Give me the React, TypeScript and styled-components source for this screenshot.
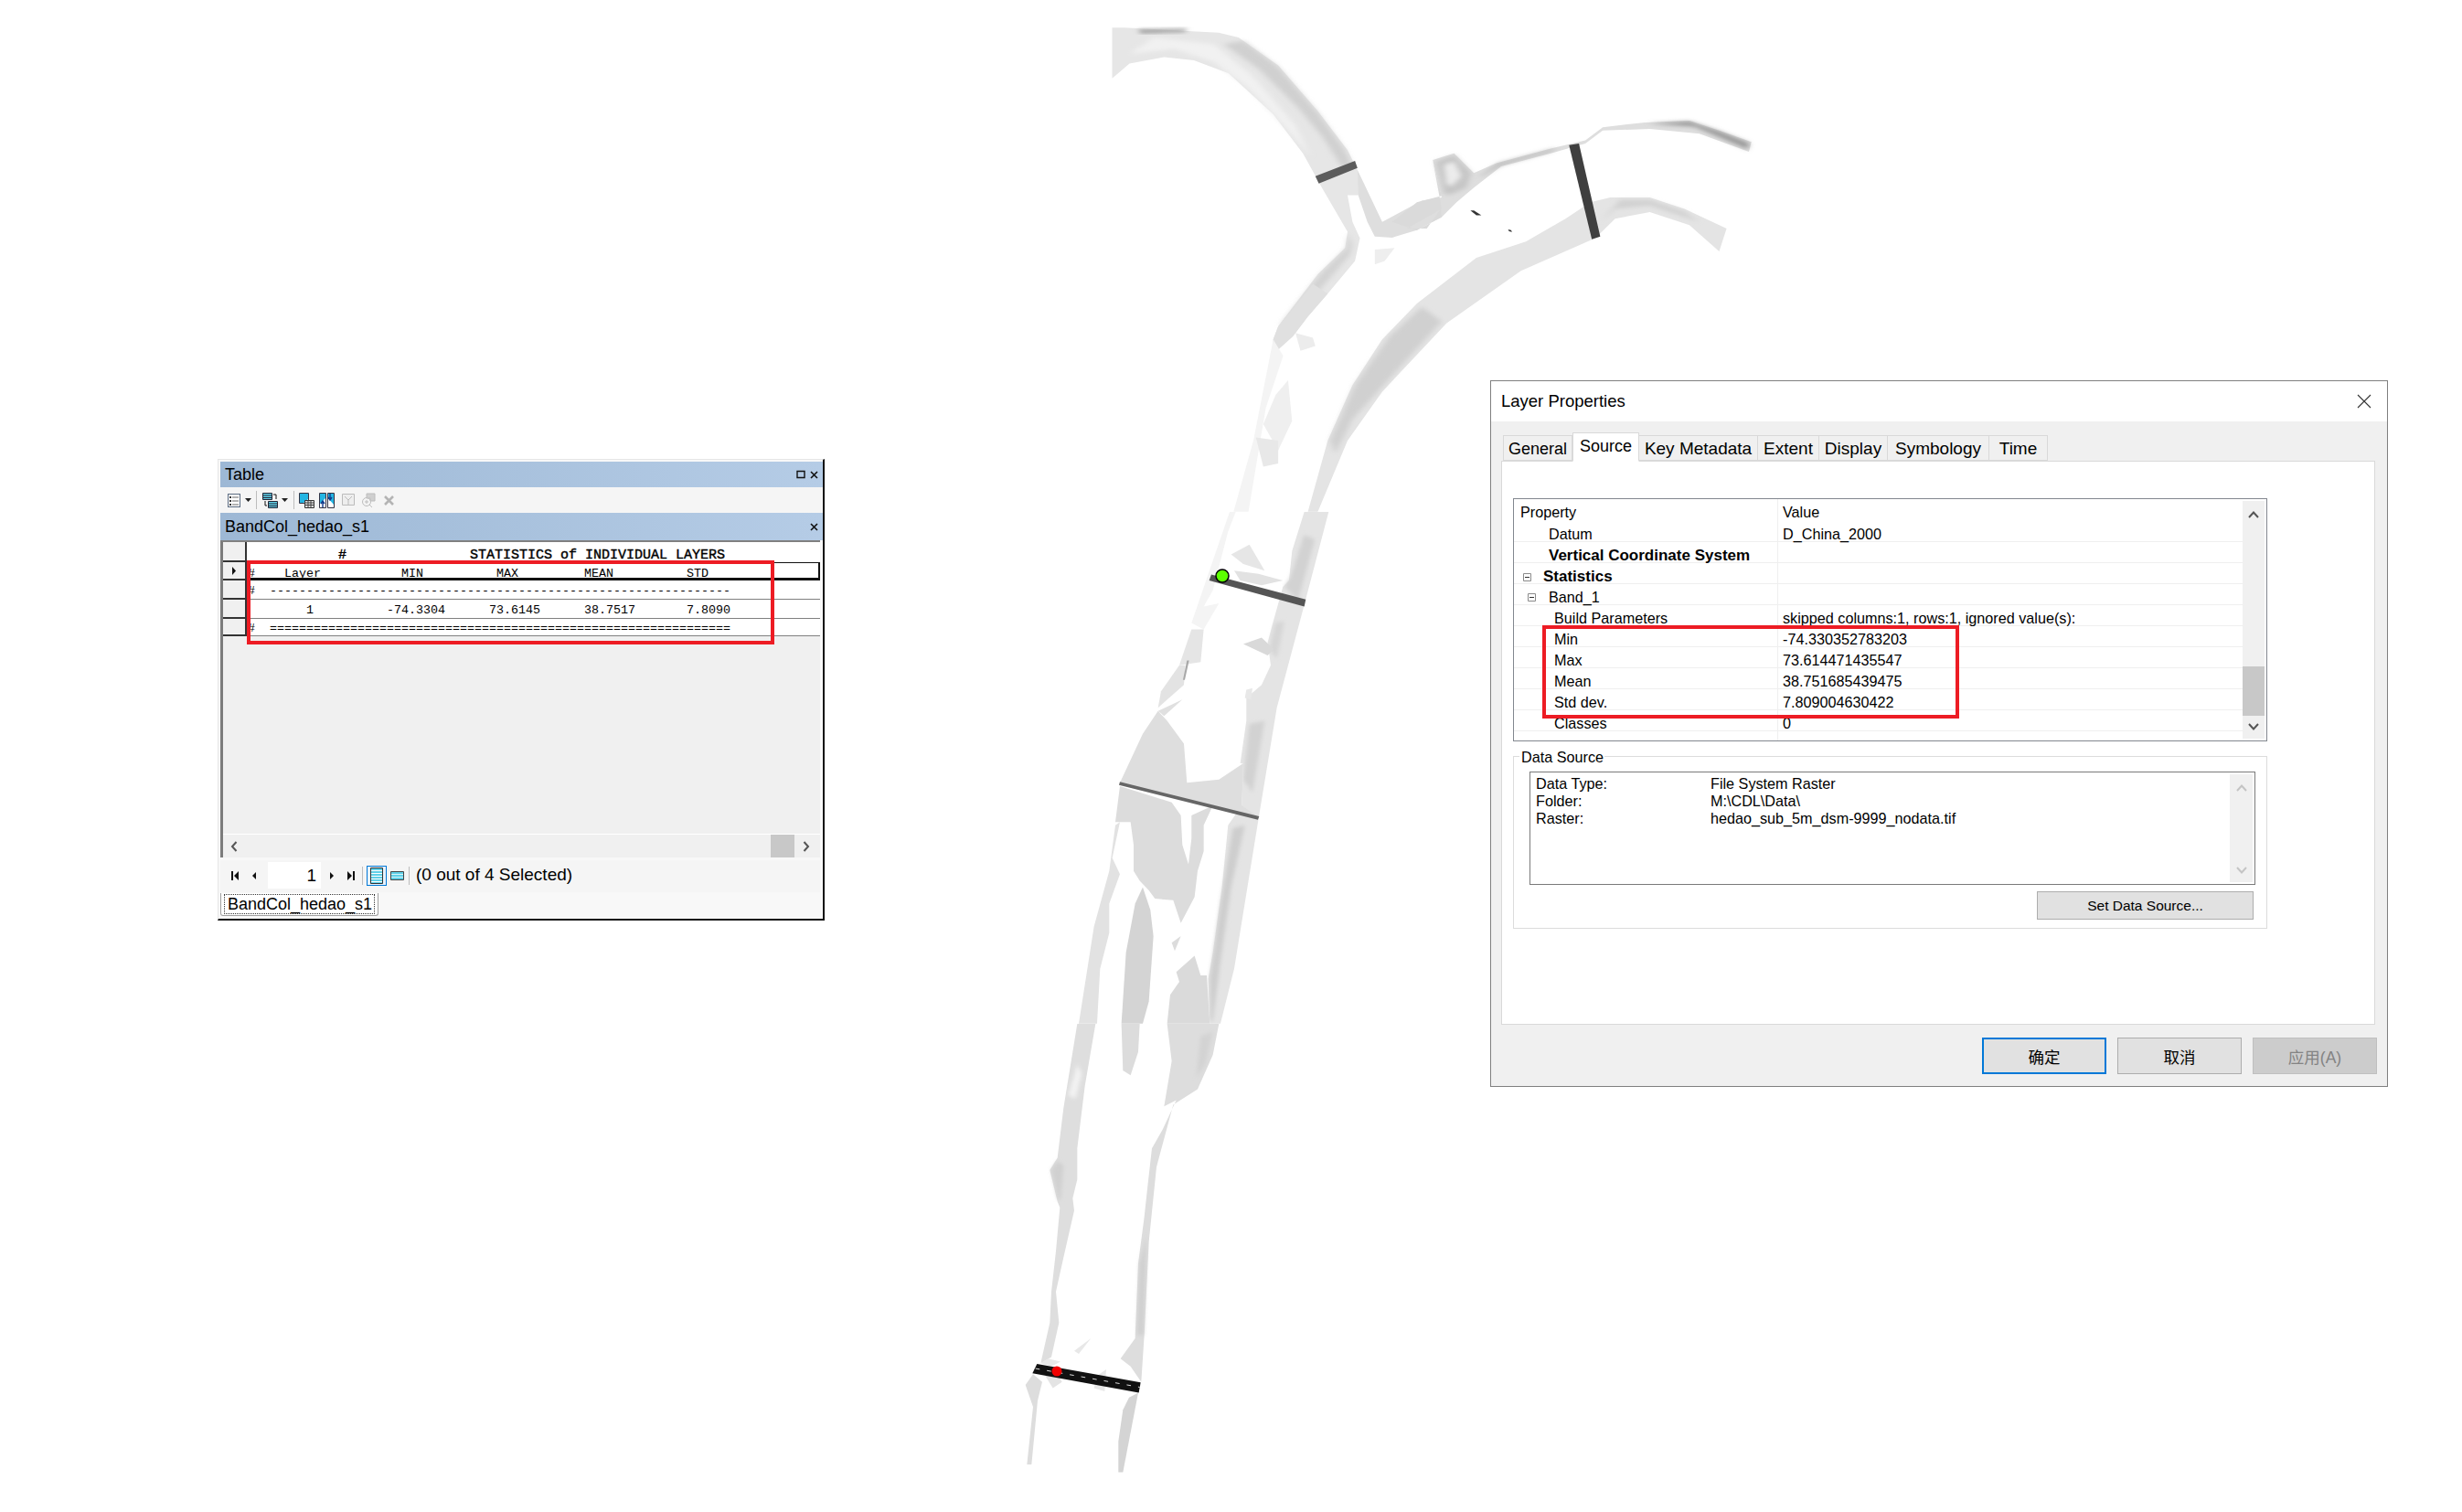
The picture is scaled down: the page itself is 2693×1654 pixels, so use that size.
import React from "react";
import styled, { createGlobalStyle } from "styled-components";

const Global = createGlobalStyle`
  html, body { margin: 0; padding: 0; background: #fff; }
  body { width: 2693px; height: 1654px; overflow: hidden; font-family: "Liberation Sans", Arial, sans-serif; color: #000; }
  #root { position: relative; width: 2693px; height: 1654px; }
`;

/* ---------- map ---------- */
const MapCanvas = styled.svg`
  position: absolute;
  left: 0;
  top: 0;
`;

type Shape = [string, string, boolean?];
const upper: Shape[] = [
  ["#e6e6e6", "215,85 240,85 430,100 470,115 550,200 630,340 690,460 710,520 715,598 690,598 700,680 715,730 705,800 650,900 610,970 580,1030 540,1085 540,1040 550,1000 630,840 685,760 690,710 640,580 600,470 540,350 450,225 380,185 320,175 250,195 215,240"],
  ["#d0d0d0", "480,125 550,205 630,345 685,460 700,510 680,515 640,420 590,330 510,210 440,135", true],
  ["#f1f1f1", "300,115 420,135 500,235 585,385 615,480 570,400 490,270 420,190 340,150 250,165", true],
  ["#d2d2d2", "692,715 688,760 635,840 555,995 570,1000 650,860 695,780 700,750", true],
  ["#e0e0e0", "650,900 610,970 580,1030 540,1085 540,1040 550,1000 620,870"],
  ["#dedede", "710,520 760,680 840,615 880,605 862,490 905,470 945,530 990,500 1100,455 1170,430 1205,390 1290,375 1380,370 1440,400 1505,435 1500,465 1400,410 1300,395 1205,400 1170,440 1100,470 1000,510 945,575 910,620 880,665 830,705 780,728 745,725 730,680 712,600"],
  ["#c6c6c6", "868,495 905,475 940,530 930,575 900,595 885,595", true],
  ["#ececec", "885,505 905,495 920,540 900,570 890,565", true],
  ["#b0b0b0", "995,500 1100,458 1115,452 1100,464 1000,506 960,540 955,542", true],
  ["#999999", "1295,378 1380,372 1440,402 1500,438 1498,458 1440,420 1390,388", true],
  ["#999999", "268,90 368,88 360,98 272,102", true],
  ["#e4e4e4", "1220,605 1300,605 1370,640 1455,700 1440,770 1380,690 1300,650 1230,670 1190,730 1040,830 890,990 760,1200 690,1350 630,1568 610,1568 650,1350 700,1180 760,1040 830,930 950,790 1050,740 1130,670 1180,620"],
  ["#d2d2d2", "1240,612 1300,612 1370,648 1400,680 1300,630 1230,640 1200,680", true],
  ["#d0d0d0", "840,940 880,985 790,1135 700,1285 665,1390 655,1350 705,1180 775,1030", true],
  ["#dadada", "862,490 880,600 830,620 780,680 830,705 880,665 878,640 850,700 810,700 880,640"],
  ["#f4f4f4", "540,1040 500,1350 460,1568 490,1568 525,1250 560,1090"],
  ["#efefef", "570,1165 578,1290 550,1380 520,1300 545,1210"],
  ["#e8e8e8", "505,1340 550,1350 550,1420 520,1430"],
  ["#eeeeee", "745,765 785,760 765,800 745,810"],
  ["#ececec", "585,1020 620,1035 625,1060 595,1075"],
];
const upperBars: Shape[] = [
  ["#5c5c5c", "625,540 705,493 710,515 632,562"],
  ["#3f3f3f", "1137,445 1157,440 1200,725 1183,733"],
  ["#333333", "938,645 945,645 960,660 950,660"],
  ["#333333", "1014,703 1020,705 1022,711 1016,709"],
];
const middle: Shape[] = [
  ["#f4f4f4", "885,0 760,340 800,360 850,280 800,290 830,240 880,60 905,0"],
  ["#e4e4e4", "1130,0 1210,0 1130,285 1040,600 980,940 900,1400 855,1568 820,1568 815,1430 830,1350 860,1150 880,960 925,900 930,770 920,770 940,640 940,570 990,530 1020,470 1010,400 1030,330 1060,230 1080,210 1090,120"],
  ["#d2d2d2", "1130,70 1165,85 1110,270 1065,230 1085,200", true],
  ["#d6d6d6", "1035,340 1065,335 1040,450 1015,420", true],
  ["#d2d2d2", "950,650 1000,640 960,860 930,820", true],
  ["#cecece", "895,970 935,960 890,1150 855,1380 830,1560 822,1560 820,1430 855,1200", true],
  ["#dedede", "650,610 600,680 525,830 980,935 925,900 930,770 850,820 745,830 735,710 680,640"],
  ["#dcdcdc", "525,840 510,950 560,950 570,1020 570,1100 590,1130 620,1160 640,1185 700,1190 725,1260 770,1180 780,1100 800,1040 800,960 830,900 760,930 760,1000 750,1080 730,1020 725,930 695,890"],
  ["#e2e2e2", "510,960 490,1100 440,1270 390,1568 450,1568 460,1400 490,1290 490,1200 525,1110 500,1060 525,950"],
  ["#d4d4d4", "600,1150 625,1220 635,1300 620,1500 600,1568 530,1568 545,1350 575,1200"],
  ["#dadada", "770,1360 790,1420 810,1420 820,1568 680,1568 690,1480 720,1440 710,1410"],
  ["#e6e6e6", "890,130 950,100 1000,180 930,160"],
  ["#e2e2e2", "900,180 980,190 1060,210 990,225 920,210"],
  ["#d9d9d9", "930,405 990,385 1030,420 1010,440"],
  ["#e0e0e0", "650,610 730,575 670,625"],
  ["#e5e5e5", "760,360 800,360 790,460 720,470"],
  ["#e3e3e3", "720,470 690,510 660,550 650,600 735,530 740,470"],
  ["#e8e8e8", "940,545 960,540 955,575 935,570"],
  ["#dcdcdc", "695,1320 725,1300 705,1345"],
  ["#a8a8a8", "745,455 752,455 738,515 732,515"],
];
const middleBars: Shape[] = [
  ["#555555", "825,192 1135,268 1130,290 818,210"],
  ["#666666", "525,827 982,933 978,943 522,837"],
];
const lower: Shape[] = [
  ["#dedede", "295,0 250,270 230,430 205,470 230,570 238,590 225,730 210,860 205,960 175,1090 210,1070 235,960 225,860 250,750 285,600 280,560 295,500 295,400 320,200 355,0"],
  ["#f2f2f2", "295,130 310,160 290,240 265,230", true],
  ["#d0d0d0", "210,470 230,440 250,455 240,565 232,565", true],
  ["#dcdcdc", "440,0 445,150 470,165 495,90 500,0"],
  ["#dddddd", "590,0 605,120 580,265 620,245 575,340 540,400 525,530 515,620 495,770 485,1010 437,1075 470,1100 505,1150 515,1000 530,700 555,460 610,260 690,210 740,100 760,0"],
  ["#cfcfcf", "500,770 522,680 512,1000 492,1000", true],
  ["#d3d3d3", "700,40 740,25 715,130 685,175", true],
  ["#d4d4d4", "495,1185 445,1440 430,1440 430,1340 445,1240 465,1200"],
  ["#dddddd", "150,1125 125,1160 150,1230 130,1415 145,1415 165,1210 180,1150"],
  ["#e4e4e4", "190,1130 215,1170 245,1150 230,1125"],
  ["#e8e8e8", "175,1090 200,1075 240,1085 210,1100"],
  ["#e8e8e8", "285,1050 340,1010 300,1060"],
  ["#e8e8e8", "360,1130 390,1110 385,1180 350,1170"],
];

const polys = (items: Shape[]) =>
  items.map(([fill, points, soft], i) => (
    <polygon key={i} fill={fill} points={points} filter={soft ? "url(#soft)" : undefined} />
  ));

const RiverMap = () => (
  <MapCanvas width={2693} height={1654} viewBox="0 0 2693 1654">
    <defs>
      <filter id="soft" x="-30%" y="-30%" width="160%" height="160%">
        <feGaussianBlur stdDeviation="6" />
      </filter>
    </defs>
    <g transform="translate(1100 0) scale(.542 .357)">{polys(upper)}</g>
    <g transform="translate(1050 560) scale(.3333 .357)">{polys(middle)}</g>
    <g transform="translate(1080 1120) scale(.3333 .3406)">{polys(lower)}</g>
    <g transform="translate(1100 0) scale(.542 .357)">{polys(upperBars)}</g>
    <g transform="translate(1050 560) scale(.3333 .357)">{polys(middleBars)}</g>
    <g transform="translate(1080 1120) scale(.3333 .3406)">
      <polygon fill="#111" points="163,1092 503,1152 497,1185 148,1122" />
      <line x1="158" y1="1107" x2="500" y2="1167" stroke="#fff" strokeWidth="2.5" strokeDasharray="14 24" />
    </g>
    <circle cx="1337" cy="630" r="7" fill="#5cff00" stroke="#000" strokeWidth="1.5" />
    <circle cx="1156" cy="1500" r="5.5" fill="#f00000" />
  </MapCanvas>
);

/* ---------- table window ---------- */
const TableWindow = styled.section`
  position: absolute;
  left: 238px;
  top: 502px;
  width: 664px;
  height: 505px;
  box-sizing: border-box;
  padding: 2px 0 0 2px;
  background: #f8f8f8;
  border-right: 2px solid #111;
  border-bottom: 2px solid #111;
  border-top: 1px solid #e6e6e6;
  border-left: 1px solid #e6e6e6;
  display: flex;
  flex-direction: column;
`;
const CaptionBar = styled.header<{ $h: number }>`
  height: ${(p) => p.$h}px;
  flex: none;
  display: flex;
  align-items: center;
  padding: 0 5px 0 5px;
  background: linear-gradient(90deg, #9db8d5, #b5cce6);
  font-size: 18px;
  span { flex: 1; }
`;
const CaptionIcon = styled.svg`
  margin-left: 5px;
  flex: none;
`;
const ToolStrip = styled.div`
  height: 28px;
  flex: none;
  display: flex;
  align-items: center;
  padding-left: 8px;
  background: #f5f5f5;
`;
const ToolIcon = styled.svg<{ $gap?: number }>`
  flex: none;
  margin-left: ${(p) => p.$gap ?? 0}px;
`;
const ToolSep = styled.i<{ $gap: number }>`
  width: 1px;
  height: 20px;
  background: #bdbdbd;
  margin-left: ${(p) => p.$gap}px;
  flex: none;
`;
const GridFrame = styled.div`
  flex: none;
  height: 347px;
  margin-right: 3px;
  box-sizing: border-box;
  border-left: 3px solid #7c7c7c;
  border-top: 2px solid #808080;
  background: #f0f0f0;
  display: flex;
  flex-direction: column;
`;
const GridRow = styled.div<{ $h: number }>`
  height: ${(p) => p.$h}px;
  flex: none;
  display: flex;
`;
const RowHead = styled.div`
  width: 26px;
  flex: none;
  box-sizing: border-box;
  background: #f0f0f0;
  border-bottom: 2px solid #333;
  border-right: 2px solid #333;
  display: flex;
  align-items: center;
  justify-content: center;
`;
const RowCell = styled.pre<{ $sel?: boolean; $head?: boolean }>`
  flex: 1;
  margin: 0;
  box-sizing: border-box;
  background: #fff;
  padding: 3px 0 0 1px;
  font-family: "Liberation Mono", "DejaVu Sans Mono", monospace;
  font-size: ${(p) => (p.$head ? 15 : 13.33)}px;
  -webkit-text-stroke: ${(p) => (p.$head ? "0.4px #000" : "0")};
  display: flex;
  align-items: center;
  border-bottom: ${(p) => (p.$sel ? "3px solid #111" : "1px solid #808080")};
  ${(p) => (p.$sel ? "border-top: 1px solid #111; border-right: 2px solid #111; padding-top: 6px;" : "")}
  ${(p) => (p.$head ? "border-bottom: 0; padding-top: 6px;" : "")}
`;
const GridFill = styled.div`
  flex: 1;
  border-bottom: 1px solid #fff;
`;
const HScroll = styled.div`
  height: 25px;
  flex: none;
  display: flex;
  align-items: center;
  justify-content: space-between;
  padding: 0 11px 0 8px;
  background: #f0f0f0;
`;
const HThumb = styled.div`
  width: 26px;
  height: 25px;
  background: #c8c8c8;
  margin-left: auto;
  margin-right: 9px;
`;
const StatusBar = styled.div`
  flex: none;
  height: 35px;
  margin-top: 3px;
  margin-right: 3px;
  background: #f5f5f5;
  box-sizing: border-box;
  padding: 0 0 2px 12px;
  display: flex;
  align-items: center;
`;
const PageInput = styled.div`
  width: 58px;
  height: 29px;
  margin-left: 10px;
  background: #fff;
  box-sizing: border-box;
  padding-right: 5px;
  text-align: right;
  font-size: 19px;
  line-height: 29px;
`;
const ViewButton = styled.div`
  width: 22px;
  height: 22px;
  box-sizing: border-box;
  margin-left: 4px;
  border: 1px solid #0078d7;
  background: #e8f2fb;
  display: flex;
  align-items: center;
  justify-content: center;
  flex: none;
`;
const StatusText = styled.span`
  margin-left: 7px;
  font-size: 19px;
  line-height: 22px;
  margin-top: -1px;
`;
const SheetTabs = styled.div`
  flex: none;
  height: 26px;
  margin-top: 1px;
`;
const SheetTab = styled.div`
  display: inline-block;
  width: 173px;
  height: 25px;
  box-sizing: border-box;
  border: 1px solid #a0a0a0;
  border-top: 0;
  border-radius: 0 0 3px 3px;
  background: #fff;
  padding: 1px 3px;
  span {
    display: block;
    height: 22px;
    line-height: 21px;
    box-sizing: border-box;
    padding-left: 3px;
    font-size: 18px;
    border: 1px dotted #333;
    white-space: nowrap;
  }
`;
const CaptionClose = () => (
  <CaptionIcon width="9" height="9" viewBox="0 0 9 9">
    <path d="M1 1l7 7M8 1L1 8" stroke="#111" strokeWidth="1.6" />
  </CaptionIcon>
);

const TableRows: { h: number; text: string; sel?: boolean; head?: boolean }[] = [
  { h: 22, head: true, text: "           #               STATISTICS of INDIVIDUAL LAYERS" },
  { h: 20, sel: true, text: "#    Layer           MIN          MAX         MEAN          STD" },
  { h: 21, text: "#  ---------------------------------------------------------------" },
  { h: 21, text: "        1          -74.3304      73.6145      38.7517       7.8090" },
  { h: 19, text: "#  ===============================================================" },
];

const TableWin = () => (
  <TableWindow>
    <CaptionBar $h={28}>
      <span>Table</span>
      <CaptionIcon width="10" height="10" viewBox="0 0 10 10">
        <path d="M1 1.500h8v7H1z" fill="none" stroke="#111" strokeWidth="1.4" />
      </CaptionIcon>
      <CaptionClose />
    </CaptionBar>
    <ToolStrip>
      <ToolIcon width="14" height="15" viewBox="0 0 14 15">
        <rect x=".5" y=".5" width="13" height="14" fill="#fff" stroke="#5a6a80" />
        <path d="M5 4h7M5 8h7M5 12h7" stroke="#666" />
        <path d="M2 3h2v2H2zM2 7h2v2H2zM2 11h2v2H2z" fill="#333" />
      </ToolIcon>
      <ToolIcon $gap={5} width="7" height="4" viewBox="0 0 7 4"><path d="M0 0h7L3.500 4z" fill="#222" /></ToolIcon>
      <ToolSep $gap={5} />
      <ToolIcon $gap={6} width="17" height="17" viewBox="0 0 17 17">
        <path d="M.5.5h10v7H.5z" fill="#5fd0e8" stroke="#223" />
        <path d="M.5 3h10M.5 5.500h10" stroke="#223" />
        <path d="M6.500 9.500h10v7h-10z" fill="#5fd0e8" stroke="#223" />
        <path d="M6.500 12h10M6.500 14.500h10" stroke="#223" />
        <path d="M12 2h3v5M3 9v5h2" fill="none" stroke="#111" />
      </ToolIcon>
      <ToolIcon $gap={4} width="7" height="4" viewBox="0 0 7 4"><path d="M0 0h7L3.500 4z" fill="#222" /></ToolIcon>
      <ToolSep $gap={6} />
      <ToolIcon $gap={5} width="17" height="17" viewBox="0 0 17 17">
        <path d="M.5.5h10v11H.5z" fill="#fff" stroke="#334" />
        <path d="M1 1h9v6L5 11H1z" fill="#23b5e3" />
        <path d="M6.500 8.500h10v8h-10z" fill="#ddd" stroke="#333" />
        <path d="M6.500 11h10M6.500 13.500h10M10 8.500v8M13 8.500v8" stroke="#444" />
      </ToolIcon>
      <ToolIcon $gap={5} width="17" height="17" viewBox="0 0 17 17">
        <path d="M.5.5h7v16h-7zM9.500.5h7v16h-7z" fill="#fff" stroke="#334" />
        <path d="M1 1h6v5L1 12zM10 1h6v12l-6-7z" fill="#23b5e3" />
        <path d="M12 1v6M10 5l2 3 2-3M4 16V10M2 12l2-3 2 3" fill="none" stroke="#123a8a" strokeWidth="1.4" />
      </ToolIcon>
      <ToolIcon $gap={8} width="14" height="14" viewBox="0 0 14 14">
        <path d="M.5.5h13v12H.5z" fill="#eee" stroke="#bbb" />
        <path d="M3 3l4 4 4-4M7 7v5" fill="none" stroke="#bbb" />
      </ToolIcon>
      <ToolIcon $gap={7} width="16" height="16" viewBox="0 0 16 16">
        <circle cx="6" cy="10" r="4.500" fill="#f4f4f4" stroke="#bdbdbd" />
        <path d="M9 13l3 3M4 10h4M6 8v4" stroke="#bdbdbd" />
        <path d="M6 1h9v8H10V6H6z" fill="#cfcfcf" stroke="#bdbdbd" />
      </ToolIcon>
      <ToolIcon $gap={9} width="11" height="11" viewBox="0 0 11 11">
        <path d="M1 1l9 9M10 1l-9 9" stroke="#b4b4b4" strokeWidth="2.600" />
      </ToolIcon>
    </ToolStrip>
    <CaptionBar $h={30}>
      <span>BandCol_hedao_s1</span>
      <CaptionClose />
    </CaptionBar>
    <GridFrame>
      {TableRows.map((r, i) => (
        <GridRow key={i} $h={r.h}>
          <RowHead>
            {r.sel && (
              <svg width="6" height="9" viewBox="0 0 6 9"><path d="M1 0v9l4-4.500z" fill="#111" /></svg>
            )}
          </RowHead>
          <RowCell $sel={r.sel} $head={r.head}>{r.text}</RowCell>
        </GridRow>
      ))}
      <GridFill />
      <HScroll>
        <svg width="8" height="12" viewBox="0 0 8 12"><path d="M6.500 1L2 6l4.500 5" fill="none" stroke="#555" strokeWidth="2" /></svg>
        <HThumb />
        <svg width="8" height="12" viewBox="0 0 8 12"><path d="M1.500 1L6 6l-4.500 5" fill="none" stroke="#555" strokeWidth="2" /></svg>
      </HScroll>
    </GridFrame>
    <StatusBar>
      <svg width="9" height="10" viewBox="0 0 9 10"><path d="M0 0h2v10H0zM8 0v10L3 5z" fill="#111" /></svg>
      <ToolIcon $gap={11} width="10" height="10" viewBox="0 0 10 10"><path d="M7 1v8L3 5z" fill="#111" /></ToolIcon>
      <PageInput>1</PageInput>
      <ToolIcon $gap={7} width="10" height="10" viewBox="0 0 10 10"><path d="M3 1v8l4-4z" fill="#111" /></ToolIcon>
      <ToolIcon $gap={11} width="9" height="10" viewBox="0 0 9 10"><path d="M7 0h2v10H7zM1 0v10l5-5z" fill="#111" /></ToolIcon>
      <ToolSep $gap={8} />
      <ViewButton>
        <svg width="14" height="18" viewBox="0 0 14 18">
          <path d="M.5.5h13v17H.5z" fill="#5fd0e8" stroke="#333" />
          <path d="M1 3.500h12M1 6.500h12M1 9.500h12M1 12.500h12M1 15.500h12" stroke="#fff" strokeWidth="1" />
        </svg>
      </ViewButton>
      <ToolIcon $gap={4} width="15" height="10" viewBox="0 0 15 10">
        <path d="M.5.5h14v9H.5z" fill="#5fd0e8" stroke="#444" />
        <path d="M1 3.500h13M1 6.500h13" stroke="#d8f4fa" />
      </ToolIcon>
      <ToolSep $gap={5} />
      <StatusText>(0 out of 4 Selected)</StatusText>
    </StatusBar>
    <SheetTabs>
      <SheetTab><span>BandCol_hedao_s1</span></SheetTab>
    </SheetTabs>
  </TableWindow>
);

/* ---------- dialog ---------- */
const Dialog = styled.section`
  position: absolute;
  left: 1630px;
  top: 416px;
  width: 982px;
  height: 773px;
  box-sizing: border-box;
  border: 1px solid #7f7f7f;
  display: flex;
  flex-direction: column;
  background: #f0f0f0;
  font-size: 16.2px;
`;
const DialogHead = styled.header`
  height: 44px;
  flex: none;
  background: #fff;
  display: flex;
  align-items: center;
  justify-content: space-between;
  padding: 0 17px 0 11px;
  font-size: 18.5px;
`;
const TabRow = styled.nav`
  height: 31px;
  margin: 12px 0 0 13px;
  flex: none;
  display: flex;
  align-items: flex-end;
  position: relative;
  z-index: 1;
`;
const Tab = styled.div<{ $w: number; $on?: boolean }>`
  width: ${(p) => p.$w}px;
  height: ${(p) => (p.$on ? 32 : 28)}px;
  box-sizing: border-box;
  border: 1px solid #d9d9d9;
  border-left-width: ${(p) => (p.$on ? 1 : 0)}px;
  ${(p) => (p.$on ? "border-bottom-color: #fff; margin-bottom: -1px; padding-top: 3px;" : "padding-top: 3px;")}
  background: ${(p) => (p.$on ? "#fff" : "#f0f0f0")};
  text-align: center;
  font-size: ${(p) => (p.$on ? 18 : 19)}px;
  line-height: 22px;
  white-space: nowrap;
  &:first-child { border-left-width: 1px; font-size: 18px; }
`;
const TabPanel = styled.div`
  height: 617px;
  margin-left: 11px;
  width: 956px;
  flex: none;
  box-sizing: border-box;
  border: 1px solid #d9d9d9;
  background: #fff;
  padding: 40px 0 0 12px;
`;
const PropGrid = styled.div`
  width: 825px;
  height: 266px;
  box-sizing: border-box;
  border: 1.5px solid #82878f;
  display: flex;
`;
const PropBody = styled.div`
  width: 797px;
  flex: none;
  display: flex;
  flex-direction: column;
`;
const PropRow = styled.div<{ $head?: boolean }>`
  height: ${(p) => (p.$head ? 24 : 23)}px;
  flex: none;
  box-sizing: border-box;
  display: grid;
  grid-template-columns: 288px 1fr;
  border-bottom: 1.5px solid ${(p) => (p.$head ? "transparent" : "#efefef")};
`;
const PropFill = styled.div`
  flex: 1;
  margin-left: 288px;
  border-left: 1.5px solid #efefef;
`;
const PropName = styled.div<{ $pad: number; $bold?: boolean }>`
  display: flex;
  align-items: center;
  padding-left: ${(p) => p.$pad}px;
  padding-top: 5px;
  box-sizing: border-box;
  font-size: ${(p) => (p.$bold ? 17 : 16.2)}px;
  font-weight: ${(p) => (p.$bold ? 700 : 400)};
  white-space: nowrap;
`;
const PropValue = styled.div`
  border-left: 1.5px solid #efefef;
  padding: 5px 0 0 5px;
  display: flex;
  align-items: center;
  white-space: nowrap;
`;
const Expander = styled.svg<{ $gap: number }>`
  flex: none;
  margin-right: ${(p) => p.$gap}px;
`;
const VScroll = styled.div<{ $w: number }>`
  width: ${(p) => p.$w}px;
  flex: none;
  margin: 2px 2px 2px 0;
  background: #f0f0f0;
  display: flex;
  flex-direction: column;
  align-items: center;
  justify-content: space-between;
  padding: 11px 0 9px;
  box-sizing: border-box;
`;
const VThumb = styled.div`
  align-self: stretch;
  height: 54px;
  background: #c8c8c8;
  margin: auto 0 8px;
`;
const GroupBox = styled.fieldset`
  width: 825px;
  height: 189px;
  margin: 16px 0 0;
  padding: 16px 12px 0 17px;
  box-sizing: border-box;
  border: 1.5px solid #dcdcdc;
  position: relative;
`;
const GroupLegend = styled.span`
  position: absolute;
  left: 6px;
  top: -9px;
  padding: 0 1px 0 2px;
  background: #fff;
  line-height: 18px;
`;
const InfoBox = styled.div`
  height: 124px;
  width: 794px;
  box-sizing: border-box;
  border: 1.5px solid #7a7a7a;
  display: flex;
`;
const InfoText = styled.div`
  flex: 1;
  display: grid;
  grid-template-columns: 191px 1fr;
  grid-auto-rows: 19px;
  padding: 3px 0 0 6px;
  line-height: 19px;
  white-space: nowrap;
`;
const GroupFoot = styled.div`
  display: flex;
  justify-content: flex-end;
  margin: 7px 2px 0 0;
`;
const PushButton = styled.button<{ $w: number; $h: number; $kind?: "primary" | "off" }>`
  width: ${(p) => p.$w}px;
  height: ${(p) => p.$h}px;
  padding: 0;
  box-sizing: border-box;
  font-family: "Liberation Sans", "Noto Sans CJK SC", sans-serif;
  font-size: ${(p) => (p.$h < 35 ? 15.5 : 17.5)}px;
  color: ${(p) => (p.$kind === "off" ? "#838383" : "#000")};
  background: ${(p) => (p.$kind === "off" ? "#cccccc" : "#e1e1e1")};
  border: ${(p) => (p.$kind === "primary" ? "2px solid #0078d7" : p.$kind === "off" ? "1px solid #bfbfbf" : "1px solid #adadad")};
`;
const DialogFoot = styled.footer`
  display: flex;
  justify-content: flex-end;
  gap: 12px;
  margin: 14px 11px 0 0;
`;
const Marker = styled.div<{ $x: number; $y: number; $w: number; $h: number }>`
  position: absolute;
  left: ${(p) => p.$x}px;
  top: ${(p) => p.$y}px;
  width: ${(p) => p.$w}px;
  height: ${(p) => p.$h}px;
  box-sizing: border-box;
  border: 4.5px solid #ed1c24;
`;

const Minus = ({ gap }: { gap: number }) => (
  <Expander $gap={gap} width="9" height="9" viewBox="0 0 9 9">
    <path d="M.5.5h8v8h-8z" fill="#fff" stroke="#8a8a8a" />
    <path d="M2 4.500h5" stroke="#333" />
  </Expander>
);
const UpChevron = ({ color }: { color: string }) => (
  <svg width="12" height="8" viewBox="0 0 12 8"><path d="M1 7l5-5.500L11 7" fill="none" stroke={color} strokeWidth="2" /></svg>
);
const DownChevron = ({ color }: { color: string }) => (
  <svg width="12" height="8" viewBox="0 0 12 8"><path d="M1 1l5 5.500L11 1" fill="none" stroke={color} strokeWidth="2" /></svg>
);

const props: { name: string; value?: string; pad: number; bold?: boolean; box?: number }[] = [
  { name: "Datum", value: "D_China_2000", pad: 38 },
  { name: "Vertical Coordinate System", pad: 38, bold: true },
  { name: "Statistics", pad: 10, bold: true, box: 13 },
  { name: "Band_1", pad: 15, box: 14 },
  { name: "Build Parameters", value: "skipped columns:1, rows:1, ignored value(s):", pad: 44 },
  { name: "Min", value: "-74.330352783203", pad: 44 },
  { name: "Max", value: "73.614471435547", pad: 44 },
  { name: "Mean", value: "38.751685439475", pad: 44 },
  { name: "Std dev.", value: "7.809004630422", pad: 44 },
  { name: "Classes", value: "0", pad: 44 },
];

const tabs: [string, number][] = [
  ["General", 76],
  ["Source", 73],
  ["Key Metadata", 130],
  ["Extent", 67],
  ["Display", 75],
  ["Symbology", 111],
  ["Time", 64],
];

const PropertiesDialog = () => (
  <Dialog>
    <DialogHead>
      <span>Layer Properties</span>
      <svg width="16" height="16" viewBox="0 0 16 16"><path d="M1 1l14 14M15 1L1 15" stroke="#333" strokeWidth="1.1" /></svg>
    </DialogHead>
    <TabRow>
      {tabs.map(([t, w]) => (
        <Tab key={t} $w={w} $on={t === "Source"}>{t}</Tab>
      ))}
    </TabRow>
    <TabPanel>
      <PropGrid>
        <PropBody>
          <PropRow $head>
            <PropName $pad={7}>Property</PropName>
            <PropValue>Value</PropValue>
          </PropRow>
          {props.map((r) => (
            <PropRow key={r.name}>
              <PropName $pad={r.pad} $bold={r.bold}>
                {r.box !== undefined && <Minus gap={r.box} />}
                {r.name}
              </PropName>
              <PropValue>{r.value}</PropValue>
            </PropRow>
          ))}
          <PropFill />
        </PropBody>
        <VScroll $w={24}>
          <UpChevron color="#555" />
          <VThumb />
          <DownChevron color="#555" />
        </VScroll>
      </PropGrid>
      <GroupBox>
        <GroupLegend>Data Source</GroupLegend>
        <InfoBox>
          <InfoText>
            <span>Data Type:</span><span>File System Raster</span>
            <span>Folder:</span><span>M:\CDL\Data\</span>
            <span>Raster:</span><span>hedao_sub_5m_dsm-9999_nodata.tif</span>
          </InfoText>
          <VScroll $w={25}>
            <UpChevron color="#c4c4c4" />
            <DownChevron color="#c4c4c4" />
          </VScroll>
        </InfoBox>
        <GroupFoot>
          <PushButton $w={237} $h={31}>Set Data Source...</PushButton>
        </GroupFoot>
      </GroupBox>
    </TabPanel>
    <DialogFoot>
      <PushButton $w={136} $h={40} $kind="primary">确定</PushButton>
      <PushButton $w={136} $h={40}>取消</PushButton>
      <PushButton $w={136} $h={40} $kind="off">应用(A)</PushButton>
    </DialogFoot>
  </Dialog>
);

export default function App() {
  return (
    <>
      <Global />
      <RiverMap />
      <TableWin />
      <PropertiesDialog />
      <Marker $x={270} $y={613} $w={577} $h={92} />
      <Marker $x={1687} $y={684} $w={456} $h={102} />
    </>
  );
}
